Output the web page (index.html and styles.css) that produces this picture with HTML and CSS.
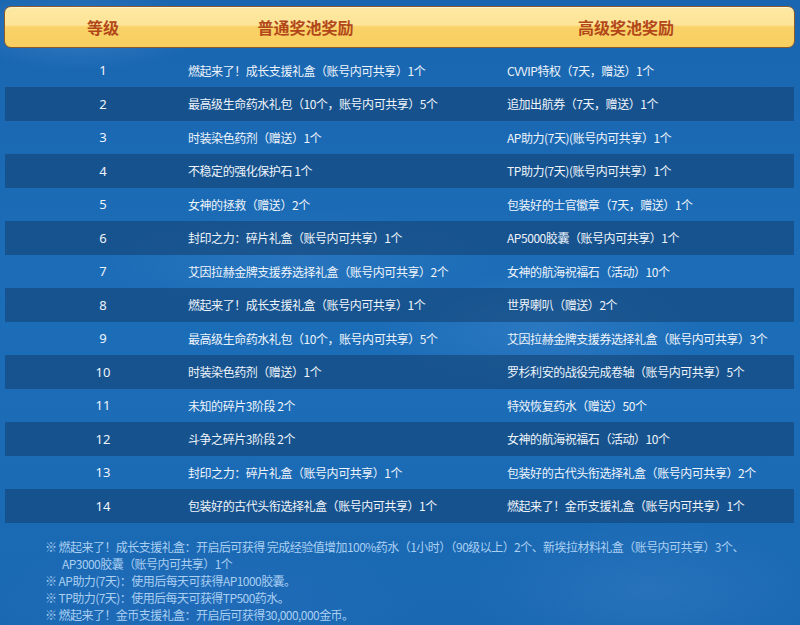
FILE: index.html
```html
<!DOCTYPE html>
<html lang="zh-CN">
<head>
<meta charset="utf-8">
<title>奖池奖励</title>
<link rel="stylesheet" href="styles.css">
</head>
<body>
<div class="page">
  <div class="head">
    <div class="h1">等级</div>
    <div class="h2">普通奖池奖励</div>
    <div class="h3">高级奖池奖励</div>
  </div>
  <div class="rows">
    <div class="row"><div class="lv">1</div><div class="c2">燃起来了！成长支援礼盒（账号内可共享）1个</div><div class="c3">CVVIP特权（7天，赠送）1个</div></div>
    <div class="row dark"><div class="lv">2</div><div class="c2">最高级生命药水礼包（10个，账号内可共享）5个</div><div class="c3">追加出航券（7天，赠送）1个</div></div>
    <div class="row"><div class="lv">3</div><div class="c2">时装染色药剂（赠送）1个</div><div class="c3">AP助力(7天)(账号内可共享）1个</div></div>
    <div class="row dark"><div class="lv">4</div><div class="c2">不稳定的强化保护石 1个</div><div class="c3">TP助力(7天)(账号内可共享）1个</div></div>
    <div class="row"><div class="lv">5</div><div class="c2">女神的拯救（赠送）2个</div><div class="c3">包装好的士官徽章（7天，赠送）1个</div></div>
    <div class="row dark"><div class="lv">6</div><div class="c2">封印之力：碎片礼盒（账号内可共享）1个</div><div class="c3">AP5000胶囊（账号内可共享）1个</div></div>
    <div class="row"><div class="lv">7</div><div class="c2">艾因拉赫金牌支援券选择礼盒（账号内可共享）2个</div><div class="c3">女神的航海祝福石（活动）10个</div></div>
    <div class="row dark"><div class="lv">8</div><div class="c2">燃起来了！成长支援礼盒（账号内可共享）1个</div><div class="c3">世界喇叭（赠送）2个</div></div>
    <div class="row"><div class="lv">9</div><div class="c2">最高级生命药水礼包（10个，账号内可共享）5个</div><div class="c3">艾因拉赫金牌支援券选择礼盒（账号内可共享）3个</div></div>
    <div class="row dark"><div class="lv">10</div><div class="c2">时装染色药剂（赠送）1个</div><div class="c3">罗杉利安的战役完成卷轴（账号内可共享）5个</div></div>
    <div class="row"><div class="lv">11</div><div class="c2">未知的碎片3阶段 2个</div><div class="c3">特效恢复药水（赠送）50个</div></div>
    <div class="row dark"><div class="lv">12</div><div class="c2">斗争之碎片3阶段 2个</div><div class="c3">女神的航海祝福石（活动）10个</div></div>
    <div class="row"><div class="lv">13</div><div class="c2">封印之力：碎片礼盒（账号内可共享）1个</div><div class="c3">包装好的古代头衔选择礼盒（账号内可共享）2个</div></div>
    <div class="row dark"><div class="lv">14</div><div class="c2">包装好的古代头衔选择礼盒（账号内可共享）1个</div><div class="c3">燃起来了！金币支援礼盒（账号内可共享）1个</div></div>
  </div>
  <div class="notes">
    <p class="note">※ 燃起来了！成长支援礼盒：开启后可获得 完成经验值增加100%药水（1小时）（90级以上）2个、新埃拉材料礼盒（账号内可共享）3个、</p>
    <p class="note cont">AP3000胶囊（账号内可共享）1个</p>
    <p class="note">※ AP助力(7天)：使用后每天可获得AP1000胶囊。</p>
    <p class="note">※ TP助力(7天)：使用后每天可获得TP500药水。</p>
    <p class="note">※ 燃起来了！金币支援礼盒：开启后可获得30,000,000金币。</p>
  </div>
</div>
</body>
</html>
```

FILE: styles.css
```css
html, body {
  margin: 0;
  padding: 0;
}
body {
  width: 800px;
  height: 625px;
  overflow: hidden;
  font-family: "Noto Sans CJK SC", "Noto Sans", sans-serif;
  background-color: #1b69b3;
  background-image:
    radial-gradient(ellipse 120px 40px at 80px 30px, rgba(120,180,235,0.25), transparent),
    radial-gradient(ellipse 160px 60px at 540px 330px, rgba(110,170,230,0.18), transparent),
    radial-gradient(ellipse 200px 50px at 300px 260px, rgba(110,170,230,0.15), transparent),
    radial-gradient(ellipse 180px 70px at 650px 590px, rgba(110,170,230,0.15), transparent),
    radial-gradient(ellipse 220px 60px at 200px 600px, rgba(40,110,190,0.5), transparent),
    linear-gradient(180deg, #1a66b0 0%, #1c6db8 50%, #1a68b2 100%);
}
.page {
  padding: 6px 5px 0 4px;
}
.head {
  height: 42px;
  box-sizing: border-box;
  border: 1px solid #8b5a2b;
  border-radius: 7px;
  background: linear-gradient(180deg, #fee9a3 0%, #fde497 45%, #f9d268 50%, #f8cf5f 100%);
  box-shadow: inset 0 1px 0 rgba(255,255,255,0.5);
  display: grid;
  grid-template-columns: 196px 1fr 336px;
  align-items: center;
  color: #b2481a;
  font-weight: 700;
  font-size: 16px;
}
.h1, .h2, .h3 {
  text-align: center;
  line-height: 20px;
}
.h2 {
  padding-right: 48px;
}
.rows {
  margin-top: 5.5px;
  margin-left: 1px;
  width: 789px;
}
.row {
  height: 33.5px;
  display: grid;
  grid-template-columns: 183px 319px 1fr;
  align-items: center;
  color: #eef4fb;
  font-size: 12px;
}
.row.dark {
  background: rgba(20, 66, 115, 0.6);
}
.lv {
  text-align: center;
  padding-left: 13px;
  font-size: 13px;
  font-family: "Noto Sans", "Noto Sans CJK SC", sans-serif;
}
.c2, .c3 {
  white-space: nowrap;
  letter-spacing: -0.45px;
}
.notes {
  margin-top: 15px;
  padding-left: 41px;
}
.note {
  margin: 0;
  font-size: 12px;
  line-height: 17px;
  color: #a9cff2;
  white-space: nowrap;
  letter-spacing: -0.55px;
}
.note.cont {
  padding-left: 17px;
}
```
